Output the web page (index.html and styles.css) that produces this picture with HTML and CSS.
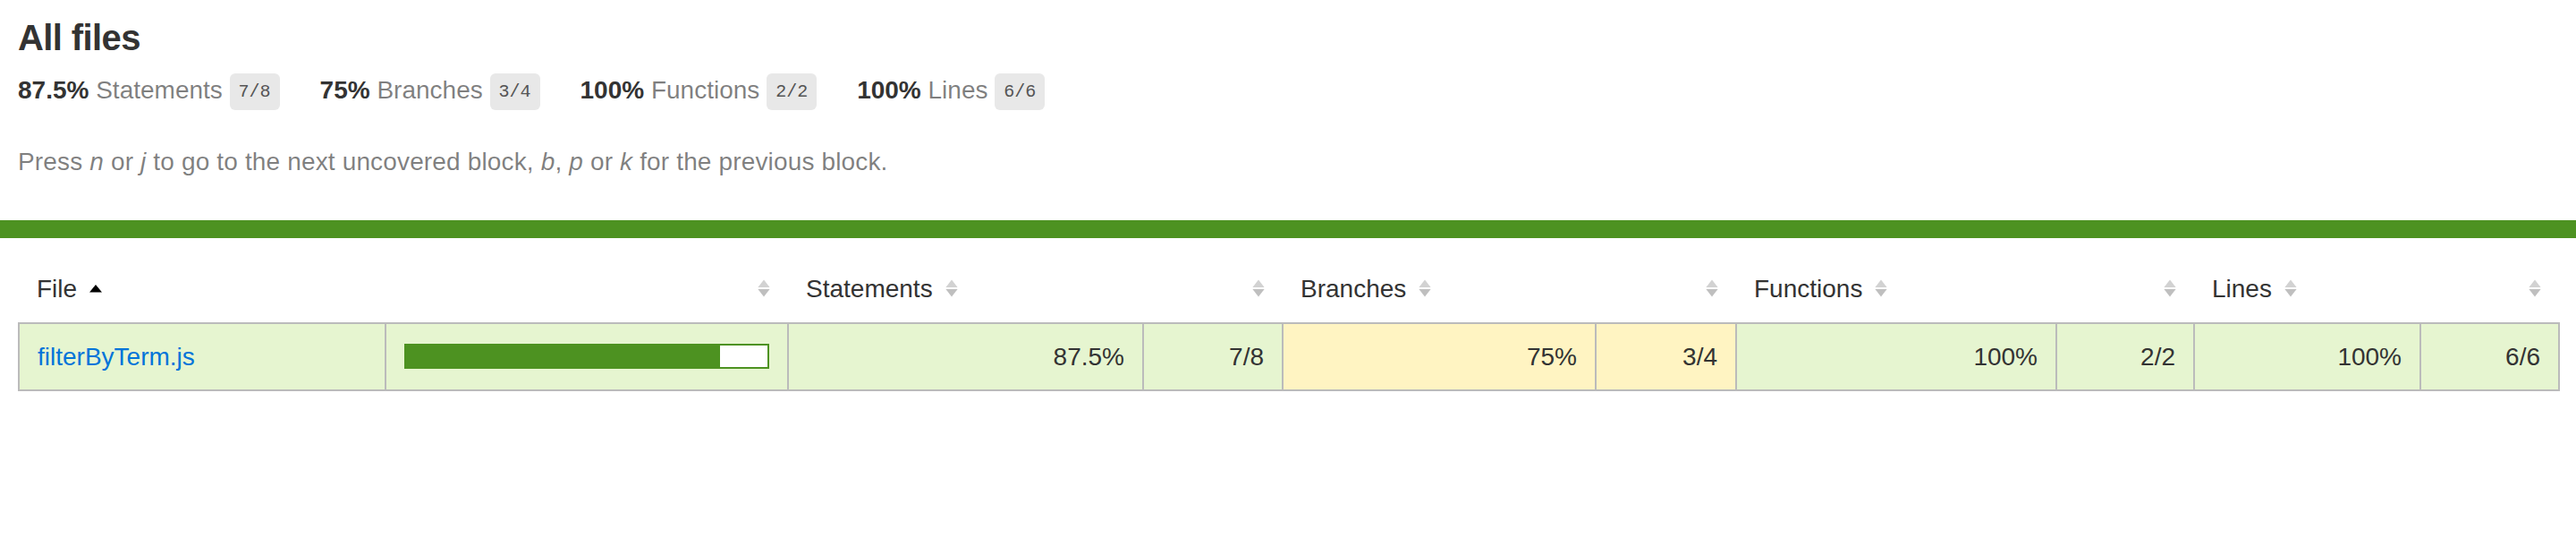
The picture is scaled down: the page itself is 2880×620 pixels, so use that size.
FILE: index.html
```html
<!doctype html>
<html>
<head>
<meta charset="utf-8">
<title>Code coverage report for All files</title>
<link rel="stylesheet" href="styles.css">
</head>
<body>
<div class="wrapper">
  <div class="pad1">
    <h1>All files</h1>
    <div class="clearfix">
      <div class="fl pad1y space-right2">
        <span class="strong">87.5% </span>
        <span class="quiet">Statements</span>
        <span class="fraction">7/8</span>
      </div>
      <div class="fl pad1y space-right2">
        <span class="strong">75% </span>
        <span class="quiet">Branches</span>
        <span class="fraction">3/4</span>
      </div>
      <div class="fl pad1y space-right2">
        <span class="strong">100% </span>
        <span class="quiet">Functions</span>
        <span class="fraction">2/2</span>
      </div>
      <div class="fl pad1y space-right2">
        <span class="strong">100% </span>
        <span class="quiet">Lines</span>
        <span class="fraction">6/6</span>
      </div>
    </div>
    <p class="quiet help">
      Press <em>n</em> or <em>j</em> to go to the next uncovered block, <em>b</em>, <em>p</em> or <em>k</em> for the previous block.
    </p>
  </div>
  <div class="status-line high"></div>
  <div class="pad1">
    <table class="coverage-summary">
      <colgroup>
        <col class="c-file"><col class="c-pic"><col class="c-spct"><col class="c-sabs"><col class="c-bpct"><col class="c-babs"><col class="c-fpct"><col class="c-fabs"><col class="c-lpct"><col class="c-labs">
      </colgroup>
      <thead>
        <tr>
          <th class="file sorted">File<span class="sorter"><svg width="14" height="20" viewBox="0 0 7 10"><polygon points="0,7.2 3.5,3 7,7.2" fill="#000"/></svg></span></th>
          <th class="pic"><span class="sorter"><svg width="14" height="20" viewBox="0 0 7 10"><polygon points="0.2,4.5 3.5,0.3 6.8,4.5" fill="#d2d2d2"/><polygon points="0.2,5.5 3.5,9.7 6.8,5.5" fill="#bfbfbf"/></svg></span></th>
          <th class="pct">Statements<span class="sorter"><svg width="14" height="20" viewBox="0 0 7 10"><polygon points="0.2,4.5 3.5,0.3 6.8,4.5" fill="#d2d2d2"/><polygon points="0.2,5.5 3.5,9.7 6.8,5.5" fill="#bfbfbf"/></svg></span></th>
          <th class="abs"><span class="sorter"><svg width="14" height="20" viewBox="0 0 7 10"><polygon points="0.2,4.5 3.5,0.3 6.8,4.5" fill="#d2d2d2"/><polygon points="0.2,5.5 3.5,9.7 6.8,5.5" fill="#bfbfbf"/></svg></span></th>
          <th class="pct">Branches<span class="sorter"><svg width="14" height="20" viewBox="0 0 7 10"><polygon points="0.2,4.5 3.5,0.3 6.8,4.5" fill="#d2d2d2"/><polygon points="0.2,5.5 3.5,9.7 6.8,5.5" fill="#bfbfbf"/></svg></span></th>
          <th class="abs"><span class="sorter"><svg width="14" height="20" viewBox="0 0 7 10"><polygon points="0.2,4.5 3.5,0.3 6.8,4.5" fill="#d2d2d2"/><polygon points="0.2,5.5 3.5,9.7 6.8,5.5" fill="#bfbfbf"/></svg></span></th>
          <th class="pct">Functions<span class="sorter"><svg width="14" height="20" viewBox="0 0 7 10"><polygon points="0.2,4.5 3.5,0.3 6.8,4.5" fill="#d2d2d2"/><polygon points="0.2,5.5 3.5,9.7 6.8,5.5" fill="#bfbfbf"/></svg></span></th>
          <th class="abs"><span class="sorter"><svg width="14" height="20" viewBox="0 0 7 10"><polygon points="0.2,4.5 3.5,0.3 6.8,4.5" fill="#d2d2d2"/><polygon points="0.2,5.5 3.5,9.7 6.8,5.5" fill="#bfbfbf"/></svg></span></th>
          <th class="pct">Lines<span class="sorter"><svg width="14" height="20" viewBox="0 0 7 10"><polygon points="0.2,4.5 3.5,0.3 6.8,4.5" fill="#d2d2d2"/><polygon points="0.2,5.5 3.5,9.7 6.8,5.5" fill="#bfbfbf"/></svg></span></th>
          <th class="abs"><span class="sorter"><svg width="14" height="20" viewBox="0 0 7 10"><polygon points="0.2,4.5 3.5,0.3 6.8,4.5" fill="#d2d2d2"/><polygon points="0.2,5.5 3.5,9.7 6.8,5.5" fill="#bfbfbf"/></svg></span></th>
        </tr>
      </thead>
      <tbody>
        <tr>
          <td class="file high"><a href="#">filterByTerm.js</a></td>
          <td class="pic high"><div class="chart"><div class="cover-fill" style="width: 87%"></div><div class="cover-empty" style="width: 13%"></div></div></td>
          <td class="pct high">87.5%</td>
          <td class="abs high">7/8</td>
          <td class="pct medium">75%</td>
          <td class="abs medium">3/4</td>
          <td class="pct high">100%</td>
          <td class="abs high">2/2</td>
          <td class="pct high">100%</td>
          <td class="abs high">6/6</td>
        </tr>
      </tbody>
    </table>
  </div>
</div>
</body>
</html>
```

FILE: styles.css
```css
html, body {
  margin: 0;
  padding: 0;
  height: 100%;
}
body {
  font-family: "Liberation Sans", Arial, Helvetica, sans-serif;
  font-size: 28px;
  color: #333;
  background: #fff;
}
*, *:after, *:before {
  box-sizing: border-box;
}
h1 {
  font-size: 40px;
  margin: 0;
  letter-spacing: -0.6px;
}
a {
  color: #0074D9;
  text-decoration: none;
}
.strong { font-weight: bold; }
.pad1y { padding: 20px 0; }
.pad1 { padding: 20px; }
.space-right2 { padding-right: 45px; }
.clearfix { display: block; }
.clearfix:after {
  content: '';
  display: block;
  height: 0;
  clear: both;
  visibility: hidden;
}
.fl { float: left; }
.quiet { color: rgba(0, 0, 0, 0.5); }
.help {
  letter-spacing: 0.15px;
  margin-bottom: 29px;
}
.fraction {
  font-family: "Liberation Mono", "DejaVu Sans Mono", monospace;
  font-size: 20px;
  color: #555;
  background: #E8E8E8;
  padding: 9px 10px;
  border-radius: 6px;
  vertical-align: middle;
}
.status-line { height: 20px; }
.status-line.high { background: rgb(77, 146, 33); }

.coverage-summary {
  border-collapse: collapse;
  width: 100%;
  table-layout: fixed;
  line-height: 1.2;
}
.c-file { width: 410px; }
.c-pic { width: 450px; }
.c-spct { width: 397px; }
.c-sabs { width: 156px; }
.c-bpct { width: 350px; }
.c-babs { width: 157px; }
.c-fpct { width: 358px; }
.c-fabs { width: 154px; }
.c-lpct { width: 253px; }
.c-labs { width: 155px; }

.coverage-summary tr { border-bottom: 2px solid #bbb; }
.coverage-summary td,
.coverage-summary th { padding: 20px; }
.coverage-summary tbody { border: 2px solid #bbb; }
.coverage-summary td { border-right: 2px solid #bbb; }
.coverage-summary td:last-child { border-right: none; }
.coverage-summary th {
  text-align: left;
  font-weight: normal;
  white-space: nowrap;
}
.coverage-summary th.pic,
.coverage-summary th.abs,
.coverage-summary td.pct,
.coverage-summary td.abs { text-align: right; }
.coverage-summary td.file { white-space: nowrap; }
.coverage-summary .sorter {
  display: inline-block;
  width: 14px;
  height: 20px;
  margin-left: 14px;
  line-height: 0;
}
.coverage-summary .sorter svg { display: block; }

.high { background: rgb(230, 245, 208); }
.medium { background: #fff4c2; }

.chart {
  line-height: 0;
  border: 2px solid rgb(77, 146, 33);
}
.cover-fill,
.cover-empty {
  display: inline-block;
  height: 24px;
}
.high .cover-fill { background: rgb(77, 146, 33); }
.cover-empty { background: #fff; }
```
